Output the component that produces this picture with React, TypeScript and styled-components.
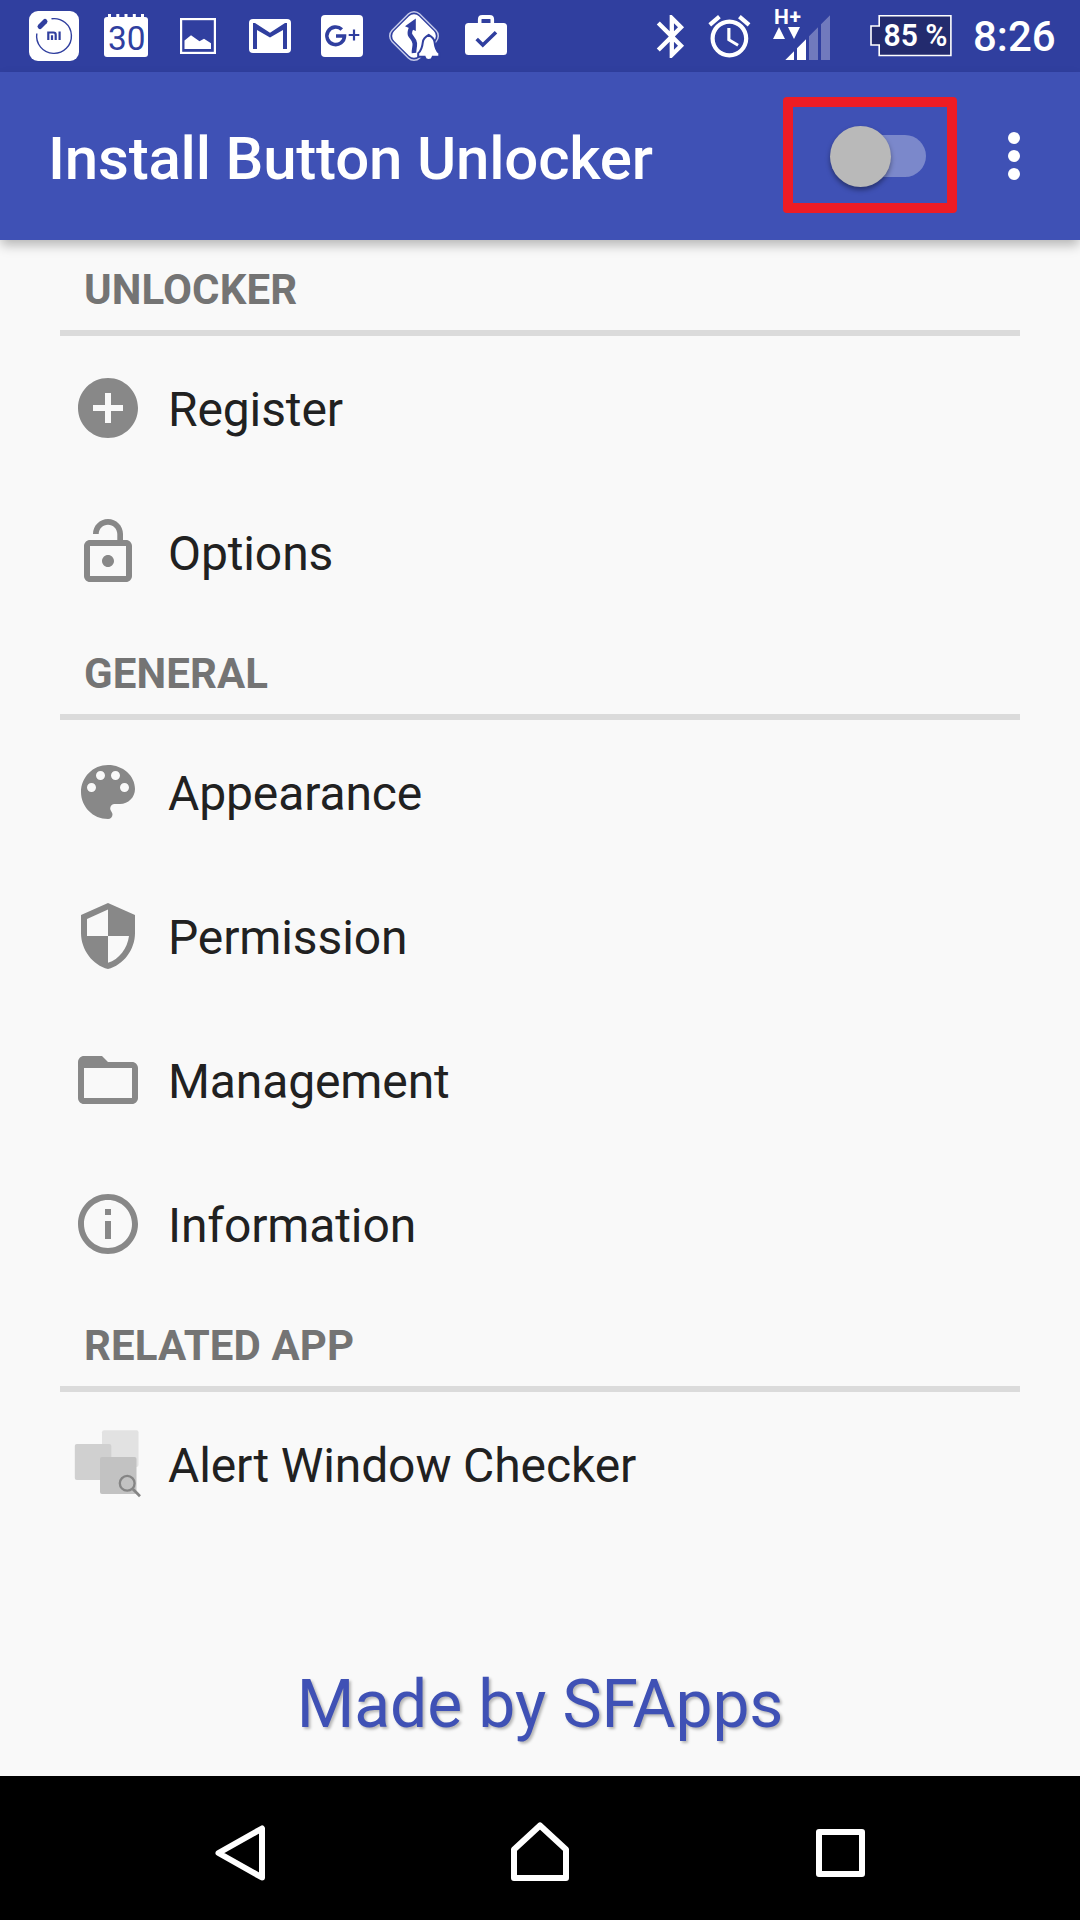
import React from "react";
import styled, { createGlobalStyle } from "styled-components";

const GlobalStyle = createGlobalStyle`
  * { box-sizing: border-box; }
  body { margin: 0; background: #f9f9f9; }
`;

const Screen = styled.div`
  width: 1080px;
  height: 1920px;
  display: flex;
  flex-direction: column;
  overflow: hidden;
  background: #f9f9f9;
  color: #212121;
  font-family: Roboto, "Liberation Sans", sans-serif;
`;

const StatusBar = styled.header`
  height: 72px;
  flex: none;
  display: flex;
  justify-content: space-between;
  padding-left: 18px;
  background: #303f9f;
`;

const StatusGroup = styled.div`
  display: flex;
`;

const StatusIcon = styled.svg<{ $width?: number }>`
  display: block;
  width: ${(p) => p.$width ?? 72}px;
  height: 72px;
  flex: none;
`;

const Clock = styled.time`
  width: 108px;
  padding-left: 1px;
  padding-top: 1px;
  color: #fff;
  font-size: 42px;
  font-weight: 500;
  line-height: 72px;
  white-space: nowrap;
`;

const AppBar = styled.div`
  height: 168px;
  flex: none;
  display: flex;
  align-items: center;
  padding-left: 48px;
  padding-right: 54px;
  background: #3f51b5;
  box-shadow: 0 6px 11px -1px rgba(0, 0, 0, 0.28);
  z-index: 1;
`;

const Title = styled.h1`
  flex: 1;
  margin: 0;
  padding-top: 5px;
  color: #fff;
  font-size: 60px;
  font-weight: 500;
  letter-spacing: -0.2px;
  line-height: 70px;
  white-space: nowrap;
`;

const Toggle = styled.button`
  position: relative;
  width: 96px;
  height: 60px;
  margin-right: 76px;
  padding: 0 0 0 10px;
  border: 0;
  background: none;
  display: flex;
  align-items: center;
`;

const Track = styled.span`
  width: 86px;
  height: 42px;
  border-radius: 21px;
  background: #7b88cb;
`;

const Thumb = styled.span`
  position: absolute;
  left: 0;
  top: 0;
  width: 61px;
  height: 61px;
  border-radius: 50%;
  background: #b9b9b9;
  box-shadow: 0 3px 5px rgba(0, 0, 0, 0.38);
`;

const Highlight = styled.span`
  position: absolute;
  left: -47px;
  top: -29px;
  width: 174px;
  height: 116px;
  border: 10px solid #ed1c24;
  border-radius: 4px;
`;

const Overflow = styled.button`
  width: 24px;
  padding: 0 6px;
  border: 0;
  background: none;
  display: flex;
  flex-direction: column;
  gap: 6px;
`;

const Dot = styled.span`
  width: 12px;
  height: 12px;
  border-radius: 50%;
  background: #fff;
`;

const Content = styled.main`
  flex: 1;
  display: flex;
  flex-direction: column;
  padding: 0 60px;
`;

const SectionHeading = styled.h2`
  height: 96px;
  margin: 0;
  padding: 10px 24px 0;
  border-bottom: 6px solid #dbdbdb;
  color: #747474;
  font-size: 42px;
  font-weight: 700;
  letter-spacing: 0.1px;
  line-height: 80px;
`;

const Row = styled.div`
  height: 144px;
  display: flex;
  align-items: center;
  gap: 24px;
  padding-left: 12px;
`;

const RowIcon = styled.svg`
  width: 72px;
  height: 72px;
  flex: none;
  fill: #888;
`;

const RowLabel = styled.span`
  padding-top: 3px;
  font-size: 48px;
  letter-spacing: -0.12px;
  line-height: 56px;
  white-space: nowrap;
`;

const Credit = styled.footer`
  flex: 1;
  display: flex;
  align-items: flex-end;
  justify-content: center;
  padding-bottom: 32px;
  color: #3f51b5;
  font-size: 66px;
  letter-spacing: -0.08px;
  line-height: 78px;
  text-shadow: 2px 2px 3px rgba(0, 0, 0, 0.28);
`;

const NavBar = styled.nav`
  height: 144px;
  flex: none;
  display: flex;
  padding: 0 90px;
  background: #000;
`;

const NavButton = styled.button`
  flex: 1;
  padding: 0;
  border: 0;
  background: none;
  display: flex;
  align-items: center;
  justify-content: center;
`;

const NavIcon = styled.svg`
  width: 72px;
  height: 72px;
  fill: none;
  stroke: #fff;
  stroke-width: 6;
  stroke-linejoin: round;
`;

const navy = "#303f9f";

const Notifications = () => (
  <StatusGroup>
    <StatusIcon viewBox="0 0 72 72">
      <rect x="11" y="11" width="50" height="50" rx="9" fill="#fff" />
      <path d="M33.500 18.800A17.400 17.400 0 1 1 18.800 33.500" fill="none" stroke={navy} strokeWidth="1.400" />
      <path d="M22 26.500l5-5" stroke={navy} strokeWidth="5" strokeLinecap="round" />
      <path d="M30.300 40v-7.500h5.200q2.200 0 2.200 2.200V40M34 35.200V40M41.600 31.500V40" fill="none" stroke={navy} strokeWidth="2.200" />
    </StatusIcon>
    <StatusIcon viewBox="0 0 72 72">
      <rect x="14" y="17" width="44" height="40" rx="3" fill="#fff" />
      <path d="M19.500 14v5M27.800 14v5M36 14v5M44.300 14v5M52.500 14v5" stroke="#fff" strokeWidth="3" />
      <text x="18" y="49.600" fill={navy} fontSize="34" textLength="37.500" lengthAdjust="spacingAndGlyphs">30</text>
    </StatusIcon>
    <StatusIcon viewBox="0 0 72 72">
      <rect x="19.100" y="19.100" width="33.800" height="33.800" fill="none" stroke="#fff" strokeWidth="2.200" />
      <path d="M22.500 49V40.500L29 35.300l8.500 6 4.500-2.600 7 4.600V49z" fill="#fff" />
    </StatusIcon>
    <StatusIcon viewBox="0 0 72 72">
      <rect x="15" y="19" width="42" height="34" rx="4" fill="#fff" />
      <path d="M19 23h2l15 9.800L51 23h2v26h-4V30l-13 7.500L23 30v19h-4z" fill={navy} />
    </StatusIcon>
    <StatusIcon viewBox="0 0 72 72">
      <rect x="15" y="15" width="42" height="42" rx="4" fill="#fff" />
      <path d="M35.800 29.500A8.800 8.800 0 1 0 38.500 36H30" fill="none" stroke={navy} strokeWidth="3.600" />
      <path d="M48 29.500v11M42.700 35h10.600" stroke={navy} strokeWidth="2.200" />
    </StatusIcon>
    <StatusIcon viewBox="0 0 72 72">
      <rect x="16.500" y="16.500" width="39" height="39" rx="8" transform="rotate(45 36 36)" fill={navy} stroke="#c3c8e8" strokeWidth="1.500" />
      <rect x="18.500" y="18.500" width="35" height="35" rx="7" transform="rotate(45 36 36)" fill="#fff" />
      <path d="M34.500 25c-1 3-3.500 6-2.500 9.500 1 3 4.500 4.500 4.800 9 .2 3.500-1 6-.8 9.500" fill="none" stroke={navy} strokeWidth="4.600" />
      <path d="M27 26.300L37.800 18.500V31z" fill={navy} />
      <path d="M50.700 34.800c2.200 1.200 5.300 3 5.800 7 .5 4.500 1 8.500 4.800 11.500v3.400h-6.500a4.200 4.200 0 0 1-8.200 0H40.200v-3.400c3.800-3 4.200-7 4.700-11.500.5-4 3.600-5.800 5.800-7z" fill="#fff" stroke={navy} strokeWidth="2" />
    </StatusIcon>
    <StatusIcon viewBox="0 0 72 72">
      <rect x="15" y="23" width="42" height="32" rx="3.500" fill="#fff" />
      <path d="M29.800 24v-4.500q0-2.500 2.500-2.500h7.400q2.500 0 2.500 2.500V24" fill="none" stroke="#fff" strokeWidth="3.800" />
      <path d="M31.700 19h8.600v4h-8.600z" fill={navy} />
      <path d="M26.700 39l6.100 6L46 32.300" fill="none" stroke={navy} strokeWidth="3.600" />
    </StatusIcon>
  </StatusGroup>
);

const SystemStatus = () => (
  <StatusGroup>
    <StatusIcon $width={60} viewBox="0 0 60 72">
      <path
        transform="translate(6 10.700) scale(2.150)"
        fill="#fff"
        d="M17.710 7.710L12 2h-1v7.590L6.410 5 5 6.410 10.590 12 5 17.590 6.410 19 11 14.410V22h1l5.710-5.710-4.300-4.290 4.300-4.290zM13 5.830l1.880 1.880L13 9.590V5.830zm1.880 10.460L13 18.170v-3.760l1.880 1.880z"
      />
    </StatusIcon>
    <StatusIcon $width={60} viewBox="0 0 60 72">
      <path
        transform="translate(4.200 11.200) scale(2.100)"
        fill="#fff"
        d="M22 5.720l-4.600-3.860-1.290 1.530 4.600 3.860L22 5.720zM7.880 3.390L6.600 1.860 2 5.710l1.290 1.530 4.590-3.850zM12.500 8H11v6l4.750 2.850.75-1.230-4-2.370V8zM12 4c-4.970 0-9 4.030-9 9s4.020 9 9 9c4.970 0 9-4.030 9-9s-4.030-9-9-9zm0 16c-3.870 0-7-3.130-7-7s3.130-7 7-7 7 3.130 7 7-3.130 7-7 7z"
      />
    </StatusIcon>
    <StatusIcon $width={106} viewBox="0 0 106 72">
      <text x="14" y="24" fill="#fff" fontSize="21" fontWeight="700" textLength="27">H+</text>
      <path d="M13 39l6-12 6 12zM28 27h12l-6 12z" fill="#fff" />
      <path d="M25.300 60L34 51.300V60zM37 60V48.300l9-9V60z" fill="#fff" />
      <path d="M49 60V36.300l9-9V60zM61 60V24.300l9-9V60z" fill="#717abd" />
    </StatusIcon>
    <StatusIcon $width={106} viewBox="0 0 106 72">
      <path d="M13.200 15.800h71.700v39.700H13.200V45H5V26h8.200z" fill="#232b6e" stroke="#fff" strokeWidth="1.600" />
      <text x="17.500" y="46.300" fill="#fff" fontSize="31" fontWeight="600" textLength="64" lengthAdjust="spacingAndGlyphs">85 %</text>
    </StatusIcon>
    <Clock>8:26</Clock>
  </StatusGroup>
);

const iconPaths = {
  add: "M12 2C6.480 2 2 6.480 2 12s4.480 10 10 10 10-4.480 10-10S17.520 2 12 2zm5 11h-4v4h-2v-4H7v-2h4V7h2v4h4v2z",
  lock: "M12 17c1.100 0 2-.9 2-2s-.9-2-2-2-2 .9-2 2 .9 2 2 2zm6-9h-1V6c0-2.760-2.240-5-5-5S7 3.240 7 6h1.900c0-1.710 1.390-3.100 3.100-3.100 1.710 0 3.100 1.390 3.100 3.100v2H6c-1.100 0-2 .9-2 2v10c0 1.100.9 2 2 2h12c1.100 0 2-.9 2-2V10c0-1.100-.9-2-2-2zm0 12H6V10h12v10z",
  palette:
    "M12 3c-4.970 0-9 4.030-9 9s4.030 9 9 9c.83 0 1.500-.67 1.500-1.500 0-.39-.15-.74-.39-1.010-.23-.26-.38-.61-.38-.99 0-.83.67-1.500 1.500-1.500H16c2.760 0 5-2.240 5-5 0-4.420-4.030-8-9-8zm-5.500 9c-.83 0-1.500-.67-1.500-1.500S5.670 9 6.500 9 8 9.670 8 10.500 7.330 12 6.500 12zm3-4C8.670 8 8 7.330 8 6.500S8.670 5 9.500 5s1.500.67 1.500 1.500S10.330 8 9.500 8zm5 0c-.83 0-1.500-.67-1.500-1.500S13.670 5 14.500 5s1.500.67 1.500 1.500S15.330 8 14.500 8zm3 4c-.83 0-1.500-.67-1.500-1.500S16.670 9 17.500 9s1.500.67 1.500 1.500-.67 1.500-1.500 1.500z",
  shield:
    "M12 1L3 5v6c0 5.550 3.840 10.740 9 12 5.160-1.260 9-6.450 9-12V5l-9-4zm0 10.990h7c-.53 4.120-3.280 7.790-7 8.940V12H5V6.300l7-3.110v8.800z",
  folder:
    "M20 6h-8l-2-2H4c-1.100 0-1.990.9-1.990 2L2 18c0 1.100.9 2 2 2h16c1.100 0 2-.9 2-2V8c0-1.100-.9-2-2-2zm0 12H4V8h16v10z",
  info: "M11 17h2v-6h-2v6zm1-15C6.480 2 2 6.480 2 12s4.480 10 10 10 10-4.480 10-10S17.520 2 12 2zm0 18c-4.410 0-8-3.590-8-8s3.590-8 8-8 8 3.590 8 8-3.590 8-8 8zM11 9h2V7h-2v2z",
};

type IconName = keyof typeof iconPaths | "windows";

const ItemIcon = ({ name }: { name: IconName }) =>
  name === "windows" ? (
    <RowIcon viewBox="0 0 72 72">
      <rect x="30" y="2.300" width="36.500" height="36.700" rx="2" fill="#e2e2e2" />
      <rect x="2.800" y="16" width="36.500" height="36" rx="2" fill="#d0d0d0" />
      <rect x="28" y="29" width="36.500" height="37" rx="2" fill="#c2c2c2" />
      <circle cx="55.200" cy="55.300" r="7.400" fill="none" stroke="#858585" strokeWidth="2.300" />
      <path d="M60.800 61l7.200 7.300" stroke="#858585" strokeWidth="2.700" />
    </RowIcon>
  ) : (
    <RowIcon viewBox="0 0 24 24">
      <path d={iconPaths[name]} />
    </RowIcon>
  );

const sections: { title: string; items: { icon: IconName; label: string }[] }[] = [
  {
    title: "UNLOCKER",
    items: [
      { icon: "add", label: "Register" },
      { icon: "lock", label: "Options" },
    ],
  },
  {
    title: "GENERAL",
    items: [
      { icon: "palette", label: "Appearance" },
      { icon: "shield", label: "Permission" },
      { icon: "folder", label: "Management" },
      { icon: "info", label: "Information" },
    ],
  },
  { title: "RELATED APP", items: [{ icon: "windows", label: "Alert Window Checker" }] },
];

export default function App() {
  return (
    <Screen>
      <GlobalStyle />
      <StatusBar>
        <Notifications />
        <SystemStatus />
      </StatusBar>
      <AppBar>
        <Title>Install Button Unlocker</Title>
        <Toggle role="switch" aria-checked={false}>
          <Track />
          <Thumb />
          <Highlight />
        </Toggle>
        <Overflow>
          <Dot />
          <Dot />
          <Dot />
        </Overflow>
      </AppBar>
      <Content>
        {sections.map((section) => (
          <section key={section.title}>
            <SectionHeading>{section.title}</SectionHeading>
            {section.items.map((item) => (
              <Row key={item.label}>
                <ItemIcon name={item.icon} />
                <RowLabel>{item.label}</RowLabel>
              </Row>
            ))}
          </section>
        ))}
        <Credit>Made by SFApps</Credit>
      </Content>
      <NavBar>
        <NavButton>
          <NavIcon viewBox="0 0 72 72">
            <path d="M58 16.500v49L14.500 41z" />
          </NavIcon>
        </NavButton>
        <NavButton>
          <NavIcon viewBox="0 0 72 72">
            <path d="M36 13.500L62 37.500V66H10V37.500z" />
          </NavIcon>
        </NavButton>
        <NavButton>
          <NavIcon viewBox="0 0 72 72">
            <rect x="15" y="20" width="43" height="42" />
          </NavIcon>
        </NavButton>
      </NavBar>
    </Screen>
  );
}
